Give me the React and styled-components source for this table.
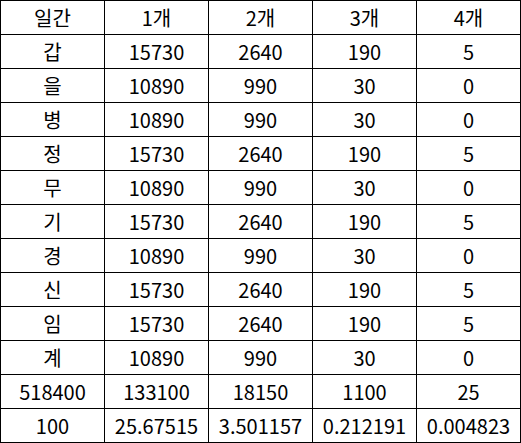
import React from "react";
import styled, { createGlobalStyle } from "styled-components";

const Global = createGlobalStyle`
  html, body { margin: 0; padding: 0; background: #fff; }
  body { font-family: "Noto Sans CJK KR", "Noto Sans", sans-serif; }
`;

const Table = styled.table`
  border-collapse: collapse;
  table-layout: fixed;
  width: 521px;
  color: #000;
`;

const Col = styled.col`
  width: 104px;
`;

const Row = styled.tr`
  height: 34px;
`;

const Cell = styled.td`
  border: 1px solid #000;
  padding: 0;
  text-align: center;
  font-size: 20px;
  line-height: 32px;
  white-space: nowrap;
`;

const header = ["일간", "1개", "2개", "3개", "4개"];

const rows = [
  ["갑", "15730", "2640", "190", "5"],
  ["을", "10890", "990", "30", "0"],
  ["병", "10890", "990", "30", "0"],
  ["정", "15730", "2640", "190", "5"],
  ["무", "10890", "990", "30", "0"],
  ["기", "15730", "2640", "190", "5"],
  ["경", "10890", "990", "30", "0"],
  ["신", "15730", "2640", "190", "5"],
  ["임", "15730", "2640", "190", "5"],
  ["계", "10890", "990", "30", "0"],
  ["518400", "133100", "18150", "1100", "25"],
  ["100", "25.67515", "3.501157", "0.212191", "0.004823"],
];

export default function App() {
  return (
    <>
      <Global />
      <Table>
        <colgroup>
          {header.map((h) => (
            <Col key={h} />
          ))}
        </colgroup>
        <tbody>
          <Row>
            {header.map((h) => (
              <Cell key={h}>{h}</Cell>
            ))}
          </Row>
          {rows.map((r, i) => (
            <Row key={i}>
              {r.map((c, j) => (
                <Cell key={j}>{c}</Cell>
              ))}
            </Row>
          ))}
        </tbody>
      </Table>
    </>
  );
}
